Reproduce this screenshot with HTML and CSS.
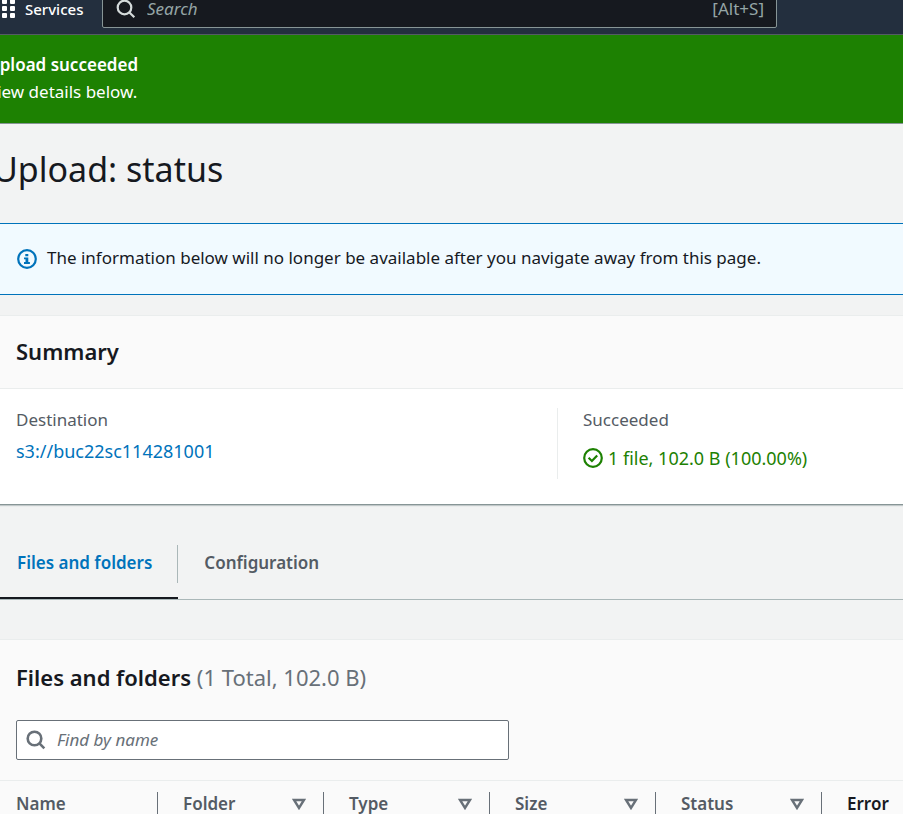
FILE: index.html
```html
<!DOCTYPE html>
<html lang="en">
<head>
<meta charset="utf-8">
<meta name="viewport" content="width=device-width, initial-scale=1">
<title>Upload: status</title>
<link rel="stylesheet" href="styles.css">
</head>
<body>
<header class="topnav">
  <button class="services" type="button">
    <svg class="grid-icon" viewBox="0 0 17 21" aria-hidden="true">
      <g fill="#fff"><rect x="2" y="0" width="5" height="5" rx="1"/><rect x="10" y="0" width="5" height="5" rx="1"/><rect x="2" y="7" width="5" height="5" rx="1"/><rect x="10" y="7" width="5" height="5" rx="1"/><rect x="2" y="14" width="5" height="5" rx="1"/><rect x="10" y="14" width="5" height="5" rx="1"/></g>
    </svg>
    <span>Services</span>
  </button>
  <label class="global-search">
    <svg class="search-icon" viewBox="0 0 20 20" aria-hidden="true"><circle cx="8.5" cy="8.5" r="6.8"/><path d="M13.2 13.2 18.3 18.3"/></svg>
    <input type="search" placeholder="Search" aria-label="Search">
    <kbd>[Alt+S]</kbd>
  </label>
</header>

<section class="flash" role="status">
  <strong>Upload succeeded</strong>
  <p>View details below.</p>
</section>

<main>
  <h1>Upload: status</h1>

  <div class="info">
    <svg class="status-icon" viewBox="0 0 20 20" aria-hidden="true"><circle cx="10" cy="10" r="8.8" fill="none" stroke="currentColor" stroke-width="2.2"/><path fill="currentColor" d="M8.3 4.9h3v2.4h-3zM7 8.4h4.3v4.7h1.6v1.9H7v-1.9h1.5v-2.8H7z"/></svg>
    <p>The information below will no longer be available after you navigate away from this page.</p>
  </div>

  <section class="panel summary">
    <h2>Summary</h2>
    <div class="columns">
      <div class="column">
        <span class="key">Destination</span>
        <a class="value" href="#destination">s3://buc22sc114281001</a>
      </div>
      <div class="column">
        <span class="key">Succeeded</span>
        <span class="value success">
          <svg class="status-icon" viewBox="0 0 20 20" fill="none" stroke="currentColor" aria-hidden="true"><circle cx="10" cy="10" r="8.8" stroke-width="2.2"/><path d="M5.6 9.8 8.9 13 14.2 7.4" stroke-width="2.2"/></svg>
          1 file, 102.0 B (100.00%)
        </span>
      </div>
    </div>
  </section>

  <div class="tabs" role="tablist">
    <button class="tab active" type="button" role="tab" aria-selected="true"><span>Files and folders</span></button>
    <button class="tab" type="button" role="tab" aria-selected="false"><span>Configuration</span></button>
  </div>

  <section class="panel files">
    <h2>Files and folders <span class="count">(1 Total, 102.0 B)</span></h2>
    <label class="filter">
      <svg class="search-icon" viewBox="0 0 20 20" aria-hidden="true"><circle cx="8.5" cy="8.5" r="6.8"/><path d="M13.2 13.2 18.3 18.3"/></svg>
      <input type="search" placeholder="Find by name" aria-label="Find by name">
    </label>
    <table>
      <thead>
        <tr>
          <th scope="col"><div>Name</div></th>
          <th scope="col"><div>Folder <svg viewBox="0 0 14 12" aria-hidden="true"><path d="M2 2h10L7 10z"/></svg></div></th>
          <th scope="col"><div>Type <svg viewBox="0 0 14 12" aria-hidden="true"><path d="M2 2h10L7 10z"/></svg></div></th>
          <th scope="col"><div>Size <svg viewBox="0 0 14 12" aria-hidden="true"><path d="M2 2h10L7 10z"/></svg></div></th>
          <th scope="col"><div>Status <svg viewBox="0 0 14 12" aria-hidden="true"><path d="M2 2h10L7 10z"/></svg></div></th>
          <th scope="col" class="plain"><div>Error</div></th>
        </tr>
      </thead>
    </table>
  </section>
</main>
</body>
</html>
```

FILE: styles.css
```css
* { box-sizing: border-box; }

body {
  margin: 0;
  height: 100vh;
  overflow: hidden;
  background: #f2f3f3;
  color: #16191f;
  font: 17px/24px "Noto Sans", "Open Sans", sans-serif;
}

h1, h2, p { margin: 0; }
button, input, kbd { font: inherit; color: inherit; }
button { border: 0; padding: 0; background: none; }
input { border: 0; padding: 0; background: none; outline: 0; min-width: 0; flex: 1; }
input::placeholder { font-style: italic; opacity: 1; }
a { color: #0073bb; text-decoration: none; }

/* Top navigation, scrolled slightly past the window's edge */
.topnav {
  display: flex;
  height: 51px;
  margin-top: -16px;
  background: #232f3e;
  border-bottom: 1px solid #545b64;
}
.services {
  display: flex;
  align-items: center;
  gap: 8px;
  width: 102px;
  color: #fff;
  font-size: 15px;
  font-weight: 500;
}
.grid-icon { width: 17px; height: 21px; }
.global-search {
  display: flex;
  align-items: center;
  gap: 11px;
  flex: 1;
  margin: 5px 126px 6px 0;
  padding: 0 12px 0 13px;
  background: #16191f;
  border: 1px solid #879596;
  border-radius: 2px;
  color: #95a5a6;
}
.search-icon {
  width: 20px;
  height: 20px;
  flex: none;
  fill: none;
  stroke: #687078;
  stroke-width: 2.6;
}
.global-search .search-icon { stroke: #d5dbdb; stroke-width: 2.2; }
.global-search input::placeholder { color: #95a5a6; }

.flash {
  height: 89px;
  margin-left: -13px;
  padding: 16px 0;
  background: #1d8102;
  border-bottom: 1px solid #879596;
  color: #fff;
}
.flash strong, .flash p { display: block; line-height: 27px; }
.flash strong { font-weight: 600; }

h1 {
  margin: 22px 0 31px -7px;
  font-size: 34px;
  line-height: 46px;
  font-weight: 400;
}

.info {
  display: flex;
  align-items: center;
  gap: 10px;
  height: 72px;
  padding: 0 17px;
  background: #f1faff;
  border: solid #0073bb;
  border-width: 1px 0;
}
.info p { padding-bottom: 2px; }
.status-icon { width: 20px; height: 20px; flex: none; }
.info .status-icon { color: #0073bb; }

.panel { background: #fff; border-top: 1px solid #eaeded; }
.panel h2 { font-size: 22px; line-height: 28px; font-weight: 600; }
.summary {
  margin-top: 20px;
  border-bottom: 1px solid #879596;
  box-shadow: 0 1px 1px rgba(0, 28, 36, 0.2);
}
.summary h2 {
  padding: 21px 16px 23px;
  background: #fafafa;
  border-bottom: 1px solid #eaeded;
}
.columns {
  display: grid;
  grid-template-columns: 557px 1fr;
  padding: 19px 0 25px;
}
.column {
  display: flex;
  flex-direction: column;
  gap: 7px;
  height: 71px;
  padding-left: 16px;
}
.column + .column {
  gap: 14px;
  padding-left: 25px;
  border-left: 1px solid #eaeded;
}
.key { color: #545b64; }
.value { font-size: 18px; }
.success { display: flex; align-items: center; gap: 5px; color: #1d8102; }

.tabs {
  display: flex;
  margin-top: 40px;
  border-bottom: 1px solid #aab7b8;
}
.tab {
  height: 54px;
  padding-bottom: 14px;
  border-bottom: 2px solid transparent;
  color: #545b64;
  font-weight: 600;
}
.tab span { display: block; padding: 6px 26px 8px; }
.tab.active { color: #0073bb; border-color: #16191f; }
.tab.active span { padding: 6px 25px 8px 17px; border-right: 1px solid #aab7b8; }

.files { margin-top: 39px; background: #fafafa; }
.files h2 { padding: 23px 16px 29px; }
.count { color: #687078; font-weight: 400; }
.filter {
  display: flex;
  align-items: center;
  gap: 11px;
  width: 493px;
  height: 40px;
  margin: 0 16px 20px;
  padding: 0 9px;
  background: #fff;
  border: 1px solid #687078;
  border-radius: 2px;
}
.filter input::placeholder { color: #687078; }

table {
  width: 100%;
  table-layout: fixed;
  border-collapse: collapse;
  border-top: 1px solid #eaeded;
}
th {
  width: 166px;
  padding: 11px 0;
  color: #545b64;
  font-weight: 600;
  text-align: left;
}
th:first-child { width: 158px; }
th:first-child div { padding-left: 16px; }
th div {
  display: flex;
  align-items: center;
  justify-content: space-between;
  padding: 0 17px 0 25px;
  border-right: 1px solid #687078;
}
th svg { width: 14px; height: 12px; fill: none; stroke: #687078; stroke-width: 2.4; }
.plain { width: auto; color: #16191f; }
.plain div { padding-right: 0; border: 0; }
```
